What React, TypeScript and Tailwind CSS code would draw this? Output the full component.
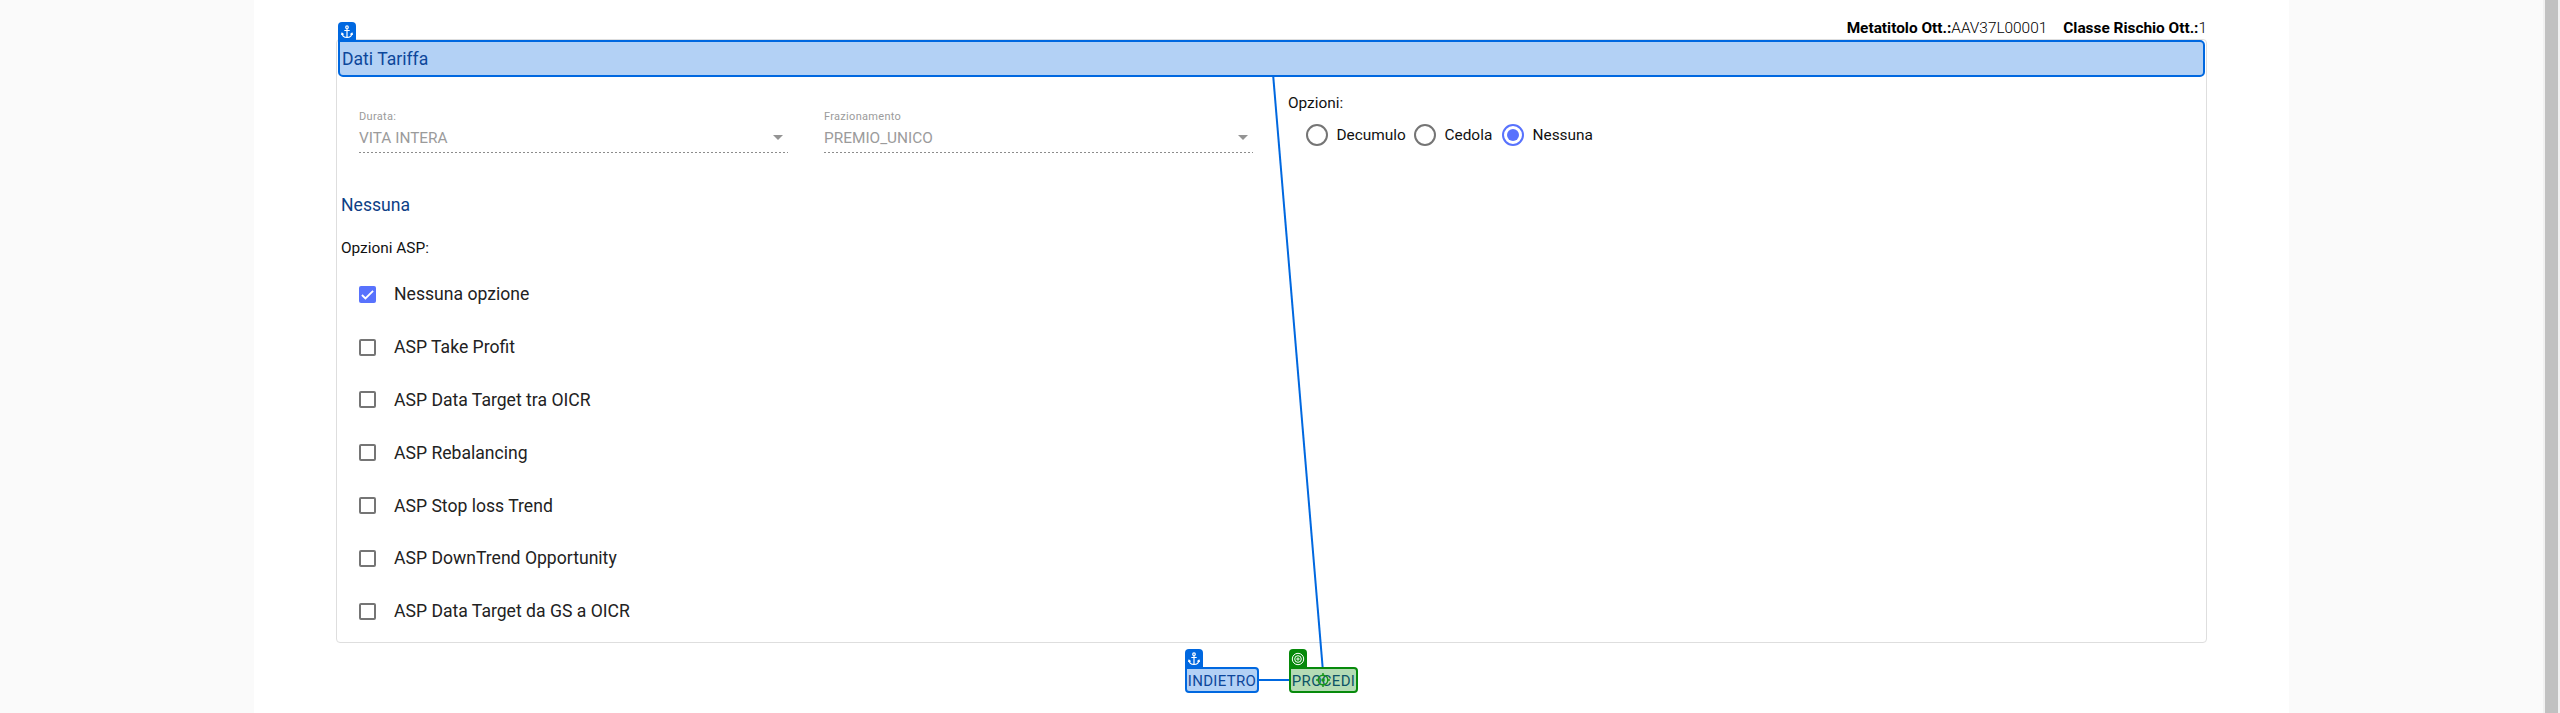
import React from "react";

const options = [
  "Nessuna opzione",
  "ASP Take Profit",
  "ASP Data Target tra OICR",
  "ASP Rebalancing",
  "ASP Stop loss Trend",
  "ASP DownTrend Opportunity",
  "ASP Data Target da GS a OICR",
];

function AnchorIcon() {
  return (
    <svg width="12" height="14" viewBox="0 0 12 14" fill="none" stroke="#fff" strokeWidth="1.2">
      <circle cx="6" cy="2.2" r="1.3" />
      <path d="M6 3.5V12.4M3.3 5.5H8.7" />
      <path d="M1 8.2C1.2 11 3.4 12.4 6 12.4S10.8 11 11 8.2M0.3 9.8L1 8.2L2.6 9.4M11.7 9.8L11 8.2L9.4 9.4" />
    </svg>
  );
}

function TargetIcon() {
  return (
    <svg width="14" height="14" viewBox="0 0 14 14" fill="none" stroke="#fff">
      <circle cx="7" cy="7" r="5.7" />
      <circle cx="7" cy="7" r="3.3" />
      <circle cx="7" cy="7" r="1.1" />
    </svg>
  );
}

function Field({ label, value }: { label: string; value: string }) {
  return (
    <div className="flex h-[44px] w-[429px] flex-col text-[#9b9b9b]">
      <span className="h-[16px] text-[11px] leading-[16px] tracking-[0.3px]">{label}</span>
      <div className="flex h-[27px] items-center justify-between pr-[5px]">
        <span className="mb-[2px] text-[15.4px] leading-[24px]">{value}</span>
        <svg className="mb-[3px]" width="10" height="5" viewBox="0 0 10 5">
          <path d="M0 0H10L5 5Z" fill="#949494" />
        </svg>
      </div>
      <svg width="429" height="1">
        <path d="M0 .5H429" stroke="#8c8c8c" strokeDasharray="2 2" />
      </svg>
    </div>
  );
}

function Radio({ label, checked, className }: { label: string; checked?: boolean; className: string }) {
  return (
    <label className={"flex items-center gap-[8.5px] " + className}>
      <span
        className={
          "flex size-[22px] shrink-0 items-center justify-center rounded-full border-2 " +
          (checked ? "border-[#5872fd]" : "border-[#757575]")
        }
      >
        {checked && <span className="size-[12px] rounded-full bg-[#5872fd]" />}
      </span>
      <span className="text-[15.4px] leading-[20px] text-[#111]">{label}</span>
    </label>
  );
}

function Option({ label, checked }: { label: string; checked: boolean }) {
  return (
    <label className="flex h-[52.8px] items-center gap-[18px]">
      {checked ? (
        <span className="flex size-[17px] items-center justify-center rounded-[2px] bg-[#5872fd]">
          <svg width="13" height="13" viewBox="0 0 24 24" fill="none" stroke="#fff" strokeWidth="3.4">
            <path d="M1.7 12.9L8.2 19.3L22.3 5.2" />
          </svg>
        </span>
      ) : (
        <span className="size-[17px] rounded-[2px] border-2 border-[#757575]" />
      )}
      <span className="text-[17.6px] leading-[24px] text-[#222]">{label}</span>
    </label>
  );
}

export default function App() {
  return (
    <div className="relative flex h-[713px] w-full overflow-hidden bg-[#fafafa] font-['Roboto',sans-serif]">
      <div className="w-[254px] shrink-0" />
      <main className="flex w-[2035px] shrink-0 flex-col bg-white pr-[82px] pl-[82px]">
        <header className="flex h-[39px] justify-end gap-[16px] pt-[17px] text-[15.4px] leading-[22px] text-black">
          <span><b className="font-bold">Metatitolo Ott.:</b><span className="font-light">AAV37L00001</span></span>
          <span><b className="font-bold">Classe Rischio Ott.:</b><span className="font-light">1</span></span>
        </header>
        <section className="h-[604px] w-[1871px] rounded-[4px] border border-[#dedede] pl-px">
          <h2 className="relative flex h-[37px] w-[1867px] items-center rounded-[5px] rounded-tl-none border-2 border-[#0068e0] bg-[#b3d1f5] pt-[2px] pl-[2px] text-[17.6px] text-[#0d479b]">
            Dati Tariffa
            <span className="absolute -top-[20px] -left-[2px] flex h-[19px] w-[18px] items-center justify-center rounded-t-[4px] bg-[#0068e0]">
              <AnchorIcon />
            </span>
          </h2>
          <div className="flex h-[109px]">
            <div className="flex gap-[36px] pt-[32px] pl-[21px]">
              <Field label="Durata:" value="VITA INTERA" />
              <Field label="Frazionamento" value="PREMIO_UNICO" />
            </div>
            <div className="pt-[16px] pl-[35px]">
              <p className="text-[15.4px] leading-[20px] text-[#111]">Opzioni:</p>
              <div className="flex pt-[11px] pl-[18px]">
                <Radio label="Decumulo" className="w-[108px]" />
                <Radio label="Cedola" className="w-[88px]" />
                <Radio label="Nessuna" className="w-[100px]" checked />
              </div>
            </div>
          </div>
          <h3 className="pt-[7px] pl-[3px] text-[17.6px] leading-[24px] text-[#0d3f86]">Nessuna</h3>
          <p className="pt-[21px] pl-[3px] text-[15.4px] leading-[20px] text-[#111]">Opzioni ASP:</p>
          <div className="pt-[10px] pl-[21px]">
            {options.map((o, i) => (
              <Option key={o} label={o} checked={i === 0} />
            ))}
          </div>
        </section>
        <div className="flex items-center pt-[24px] pl-[849px]">
          <button className="relative flex h-[26px] w-[74px] items-center justify-center rounded-[4px] rounded-tl-none border-2 border-[#0068e0] bg-[#b3d1f5] pt-[2px] text-[15px] tracking-[0.3px] text-[#0d479b]">
            INDIETRO
            <span className="absolute -top-[20px] -left-[2px] flex h-[19px] w-[18px] items-center justify-center rounded-t-[4px] bg-[#0068e0]">
              <AnchorIcon />
            </span>
          </button>
          <span className="h-[2px] w-[30px] bg-[#0068e0]" />
          <button className="relative flex h-[26px] w-[69px] items-center justify-center rounded-[4px] rounded-tl-none border-2 border-[#078a0b] bg-[#b5dbb5] pt-[2px] text-[15px] tracking-[0.3px] text-[#0e5366]">
            PROCEDI
            <span className="absolute -top-[20px] -left-[2px] flex h-[19px] w-[18px] items-center justify-center rounded-t-[4px] bg-[#078a0b]">
              <TargetIcon />
            </span>
            <svg className="absolute top-[4px] left-[25px]" width="14" height="14" viewBox="0 0 14 14" fill="none" stroke="#16961a" strokeWidth="1.5">
              <circle cx="7" cy="7" r="4.8" />
              <circle cx="7" cy="7" r="1" fill="#16961a" />
              <path d="M7 0V3M7 11V14M0 7H3M11 7H14" />
            </svg>
          </button>
        </div>
      </main>
      <div className="min-w-0 flex-1" />
      <div className="flex w-[17px] shrink-0 bg-[#f1f1f1] pl-[2px]">
        <div className="w-[13px] bg-[#c1c1c1]" />
      </div>
      <svg className="pointer-events-none absolute top-[77px] left-[1260px]" width="80" height="590" viewBox="0 0 80 590">
        <path d="M13.2 -1L62.7 591" stroke="#0068e0" strokeWidth="2" />
      </svg>
    </div>
  );
}
